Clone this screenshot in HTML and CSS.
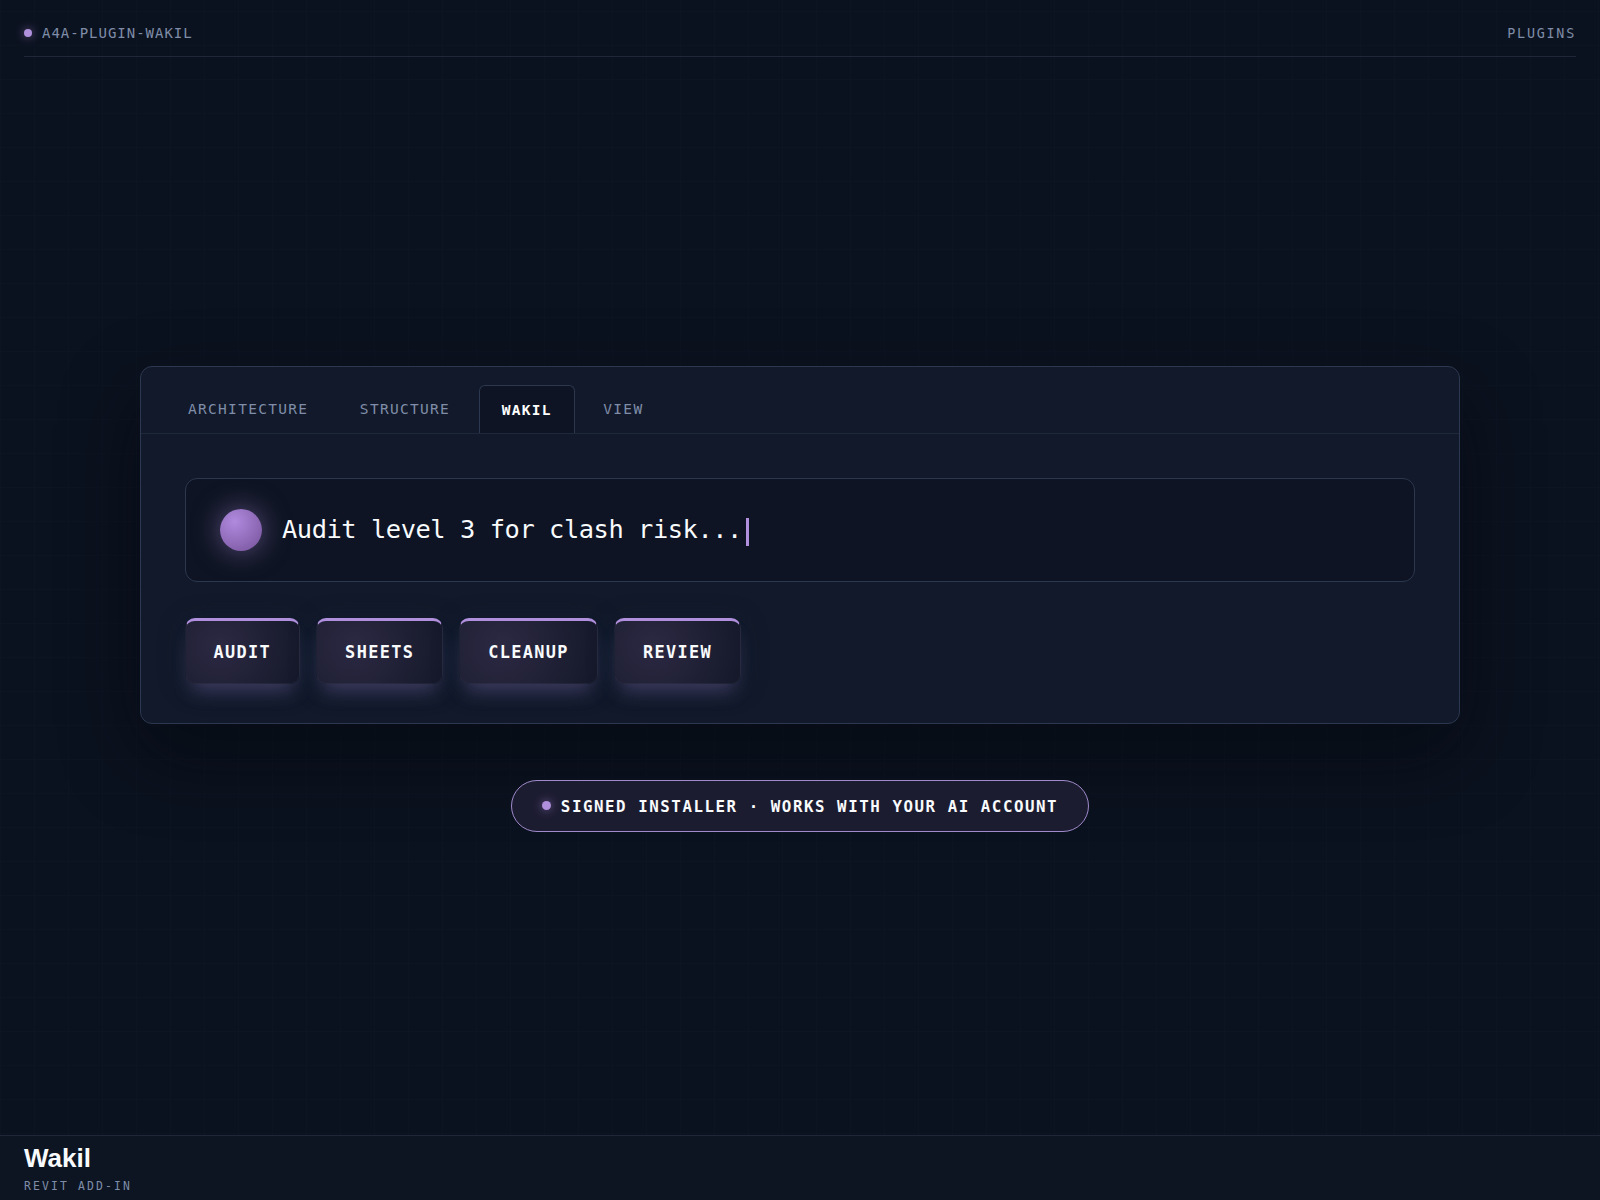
FILE: index.html
```html
<!DOCTYPE html>
<html lang="en">
<head>
<meta charset="utf-8">
<title>Wakil – Revit add-in</title>
<link rel="stylesheet" href="styles.css">
</head>
<body>
<div class="page">
  <header class="topbar">
    <div class="slug"><span class="dot"></span>A4A-PLUGIN-WAKIL</div>
    <div class="category">PLUGINS</div>
  </header>
  <main class="stage">
    <section class="panel">
      <nav class="tabs">
        <span class="tab">ARCHITECTURE</span>
        <span class="tab">STRUCTURE</span>
        <span class="tab tab-active">WAKIL</span>
        <span class="tab">VIEW</span>
      </nav>
      <div class="panel-body">
        <div class="prompt">
          <span class="orb"></span>
          <span class="prompt-text">Audit level 3 for clash risk...</span>
          <span class="caret"></span>
        </div>
        <div class="actions">
          <span class="action">AUDIT</span>
          <span class="action">SHEETS</span>
          <span class="action">CLEANUP</span>
          <span class="action">REVIEW</span>
        </div>
      </div>
    </section>
    <div class="pill"><span class="dot pill-dot"></span><span class="pill-text">SIGNED INSTALLER · WORKS WITH YOUR AI ACCOUNT</span></div>
  </main>
  <footer class="footer">
    <div class="name">Wakil</div>
    <div class="kind">REVIT ADD-IN</div>
  </footer>
</div>
</body>
</html>
```
FILE: styles.css
```css
:root {
  --accent: #b08fdc;
  --muted: #7f8da8;
  --line: #2b384f;
  --mono: Consolas, "DejaVu Sans Mono", monospace;
}
* { box-sizing: border-box; }
body { margin: 0; background: #0b111e; }
.page {
  height: 1200px;
  display: flex;
  flex-direction: column;
  font-family: var(--mono);
  color: #f8fafc;
  background:
    linear-gradient(rgba(148, 163, 220, .01) 1px, transparent 1px) 0 11px / 34px 34px,
    linear-gradient(90deg, rgba(148, 163, 220, .01) 1px, transparent 1px) 0 0 / 34px 34px,
    #0b121f;
  overflow: hidden;
}
.topbar {
  height: 57px;
  margin: 0 24px;
  padding-top: 10px;
  border-bottom: 1px solid #1f2838;
  display: flex;
  justify-content: space-between;
  align-items: center;
  color: var(--muted);
}
.slug { display: flex; align-items: center; gap: 10px; font-size: 14px; letter-spacing: .99px; }
.category { font-size: 13.4px; letter-spacing: 1.75px; }
.dot {
  width: 8px;
  height: 8px;
  border-radius: 50%;
  background: var(--accent);
  box-shadow: 0 0 10px rgba(180, 142, 224, .6);
}
.stage {
  flex: 1;
  padding-top: 309px;
  display: flex;
  flex-direction: column;
  align-items: center;
  gap: 56px;
}
.panel {
  width: 1320px;
  height: 358px;
  border: 1px solid var(--line);
  border-radius: 12px;
  background: #12192a;
  box-shadow: 0 30px 80px rgba(0, 4, 6, .45);
}
.tabs {
  height: 67px;
  padding: 18px 24px 0;
  border-bottom: 1px solid #1d293b;
  display: flex;
  gap: 5.5px;
}
.tab {
  height: 48px;
  padding: 0 22px;
  border: 1px solid transparent;
  border-bottom: 0;
  border-radius: 6px 6px 0 0;
  font-size: 14.5px;
  line-height: 47px;
  letter-spacing: 1.3px;
  color: var(--muted);
}
.tab-active {
  background: #0e1423;
  border-color: var(--line);
  color: #fff;
  font-weight: 700;
  line-height: 49px;
}
.panel-body { padding: 44px 44px 0; }
.prompt {
  height: 104px;
  padding: 0 34px;
  border: 1px solid var(--line);
  border-radius: 12px;
  background: #0e1423;
  display: flex;
  align-items: center;
}
.orb {
  width: 42px;
  height: 42px;
  margin-right: 20px;
  border-radius: 50%;
  background: radial-gradient(circle at 35% 30%, #b08ade, #75529a);
  box-shadow: 0 0 28px rgba(180, 142, 224, .5);
}
.prompt-text { margin-bottom: 2px; font-size: 25.4px; letter-spacing: -.45px; white-space: pre; }
.caret { width: 3px; height: 28px; margin: 4px 0 0 4px; background: var(--accent); }
.actions { display: flex; gap: 16px; margin-left: -.5px; padding-top: 36px; }
.action {
  height: 66px;
  padding: 0 28px;
  border: 1px solid rgba(148, 163, 184, .06);
  border-top: 3px solid var(--accent);
  border-radius: 10px;
  background: radial-gradient(circle at 30% 40%, #2c2943, #141829 100%);
  box-shadow: 0 13px 20px -7px rgba(180, 142, 224, .3), 0 4px 28px rgba(12, 40, 60, .3);
  font-size: 16.9px;
  font-weight: 700;
  line-height: 63px;
  letter-spacing: 1.35px;
}
.pill {
  height: 52px;
  padding: 0 30px;
  border: 1px solid #a08acb;
  border-radius: 26px;
  background: #1c1c31;
  display: flex;
  align-items: center;
  font-size: 15.8px;
  font-weight: 700;
  line-height: 20px;
  letter-spacing: 1.54px;
  white-space: pre;
}
.pill-text { padding-top: 2px; }
.pill-dot { width: 9px; height: 9px; margin: 0 10px 1px 0; }
.footer {
  height: 65px;
  padding: 7px 24px 0;
  border-top: 1px solid #1f2838;
  background: #0d1522;
}
.name {
  font: 700 26px/30px "Liberation Sans", Arial, sans-serif;
  letter-spacing: 0;
}
.kind {
  margin-top: 6px;
  font-size: 11.4px;
  line-height: 15px;
  letter-spacing: 2.14px;
  color: var(--muted);
}
```
